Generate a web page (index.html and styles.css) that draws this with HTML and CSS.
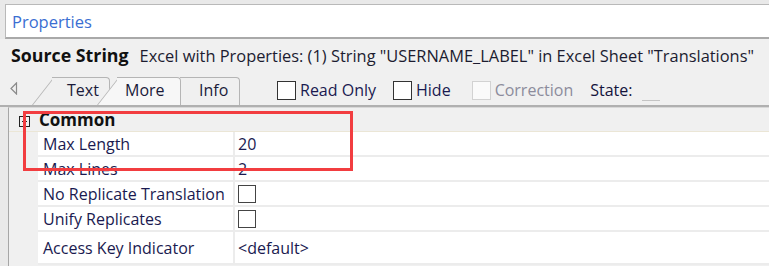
FILE: index.html
```html
<!DOCTYPE html>
<html lang="en">
<head>
    <meta charset="UTF-8">
    <title>Properties</title>
    <link rel="stylesheet" href="styles.css">
</head>
<body>
    <div class="panel">
        <div class="title-bar"><span class="title">Properties</span></div>

        <div class="source-row">
            <span class="source-label">Source String</span>
            <span class="source-text">Excel with Properties: (1) String "USERNAME_LABEL" in Excel Sheet "Translations"</span>
        </div>

        <div class="toolbar">
            <svg class="scroll-left" width="8" height="13" viewBox="0 0 8 13">
                <path d="M6.5 1 L1 6.5 L6.5 12 Z" fill="none" stroke="#8a8a8a" stroke-width="1.2"/>
            </svg>
            <div class="tabs">
                <div class="tab tab-text">Text</div>
                <div class="tab tab-more active">More</div>
                <div class="tab tab-info">Info</div>
            </div>
            <label class="check check-readonly"><span class="box"></span>Read Only</label>
            <label class="check check-hide"><span class="box"></span>Hide</label>
            <label class="check disabled"><span class="box"></span>Correction</label>
            <span class="state">State:</span>
            <span class="state-field"></span>
        </div>

        <div class="grid">
            <div class="group-row">
                <span class="toggle"></span>
                <span class="group-name">Common</span>
            </div>
            <div class="prop-row">
                <div class="prop-name">Max Length</div>
                <div class="prop-value">20</div>
            </div>
            <div class="prop-row">
                <div class="prop-name">Max Lines</div>
                <div class="prop-value">2</div>
            </div>
            <div class="prop-row">
                <div class="prop-name">No Replicate Translation</div>
                <div class="prop-value"><span class="box"></span></div>
            </div>
            <div class="prop-row">
                <div class="prop-name">Unify Replicates</div>
                <div class="prop-value"><span class="box"></span></div>
            </div>
            <div class="prop-row last">
                <div class="prop-name">Access Key Indicator</div>
                <div class="prop-value">&lt;default&gt;</div>
            </div>

            <!-- annotation drawn over the grid -->
            <div class="highlight"></div>
        </div>
    </div>
</body>
</html>
```

FILE: styles.css
```css
body {
    margin: 0;
    background: #e9e9e9;
    font-family: "Open Sans", "Liberation Sans", sans-serif;
    color: #1b1b3a;
    overflow: hidden;
}

.panel {
    width: 769px;
    height: 266px;
    padding-top: 4px;
    box-sizing: border-box;
}

.title-bar {
    height: 32px;
    margin-left: 5px;
    background: #fff;
    border: 1px solid #b9b9b9;
    border-right: none;
    border-bottom: 2px solid #a9a9a9;
    display: flex;
    align-items: center;
    padding-left: 6px;
}

.title {
    font-size: 16.5px;
    color: #3a6ed2;
}

.source-row {
    height: 32px;
    background: #f0f0f0;
    display: flex;
    align-items: center;
    padding-left: 11px;
    gap: 11px;
    white-space: nowrap;
}

.source-label {
    font-weight: bold;
    font-size: 17.8px;
    color: #111;
}

.source-text {
    font-size: 16.4px;
    color: #1c1c30;
}

.toolbar {
    height: 34px;
    background: #f0f0f0;
    display: flex;
    align-items: flex-end;
    border-bottom: 2px solid #b0b0b0;
    white-space: nowrap;
}

.scroll-left {
    margin: 0 0 10px 10px;
}

.tabs {
    display: flex;
    margin-left: 14px;
    height: 28px;
}

.tab {
    position: relative;
    height: 28px;
    line-height: 26px;
    font-size: 16px;
    box-sizing: border-box;
    z-index: 1;
}

.tab::before,
.tab::after {
    content: "";
    position: absolute;
    top: 0;
    bottom: 0;
    background: #f0f0f0;
    border-top: 1px solid #b5b5b5;
    z-index: -1;
}

/* slanted left edge */
.tab::before {
    left: 0;
    width: 30px;
    border-left: 1px solid #b5b5b5;
    transform: skewX(-38deg);
    transform-origin: bottom left;
}

/* straight body with rounded right corner */
.tab::after {
    left: 20px;
    right: 0;
    border-right: 1px solid #b5b5b5;
    border-top-right-radius: 4px;
}

.tab-text {
    width: 78px;
    padding-left: 35px;
}

.tab-more {
    width: 84px;
    margin-left: -13px;
    padding-left: 28px;
    z-index: 3;
}

.tab.active::before,
.tab.active::after {
    background: #f7f7f7;
}

.tab-info {
    width: 80px;
    margin-left: -21px;
    padding-left: 39px;
}

.check {
    display: flex;
    align-items: center;
    font-size: 16px;
    margin-bottom: 4px;
    color: #1a1a50;
}

.check .box {
    margin-right: 4px;
}

.check-readonly {
    margin-left: 37px;
}

.check-hide {
    margin-left: 17px;
}

.check.disabled {
    margin-left: 21px;
    color: #8c8c9c;
}

.check.disabled .box {
    border-color: #d2d2d2;
    background: #fafafa;
}

.box {
    display: inline-block;
    width: 17px;
    height: 17px;
    border: 1px solid #333;
    background: #fff;
}

.state {
    margin: 0 0 4px 17px;
    font-size: 16px;
    color: #14143c;
}

.state-field {
    width: 18px;
    margin: 0 0 4px 9px;
    border-bottom: 1px solid #c4c4c4;
    height: 1px;
}

.grid {
    position: relative;
    margin-left: 8px;
    height: 158px;
    border-left: 1px solid #a6a6a6;
    border-top: 1px solid #d8d8d8;
    background: #f0f0f0;
    font-size: 16px;
    color: #1a1a50;
}

.group-row {
    height: 23px;
    display: flex;
    align-items: center;
    padding-left: 10px;
    border-bottom: 1px solid #ebe6d6;
}

.toggle {
    position: relative;
    width: 9px;
    height: 9px;
    border: 1px solid #222;
    margin: 3px 9px 0 0;
}

.toggle::after {
    content: "";
    position: absolute;
    left: 2px;
    right: 2px;
    top: 4px;
    height: 1px;
    background: #222;
}

.group-name {
    font-weight: bold;
    font-size: 17px;
    color: #111;
}

.prop-row {
    display: flex;
    height: 23px;
    margin-left: 29px;
    background: #fff;
    border-bottom: 2px solid #ececec;
}

.prop-row.last {
    height: 31px;
}

.prop-name {
    width: 197px;
    box-sizing: border-box;
    padding-left: 5px;
    border-right: 2px solid #ececec;
    display: flex;
    align-items: center;
}

.prop-value {
    padding-left: 3px;
    display: flex;
    align-items: center;
}

.prop-value .box {
    width: 16px;
    height: 16px;
    border-color: #444;
}

.highlight {
    position: absolute;
    left: 14px;
    top: 3px;
    width: 324px;
    height: 54px;
    border: 3px solid #f23d40;
}
```
